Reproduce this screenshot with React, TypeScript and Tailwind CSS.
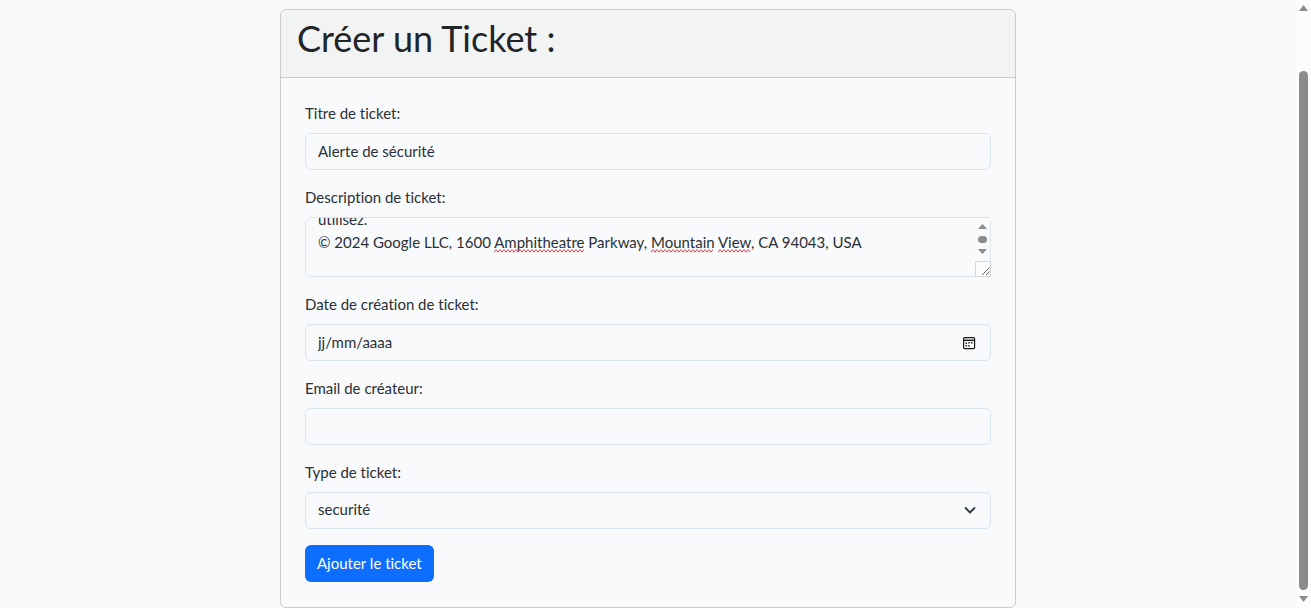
import React, { useEffect, useRef, useState } from "react";

const control =
  "block h-[37px] w-full rounded-md border border-[#d9e4ee] bg-[#f8fafc] px-3 pb-0.5 text-[15px] leading-[23px] text-[#2a3036] outline-none focus:border-blue-300";

function Field({ id, label, children }: { id: string; label: string; children: React.ReactNode }) {
  return (
    <div className="mb-4">
      <label htmlFor={id} className="mb-2 block w-fit text-[15px] leading-[23px]">
        {label}
      </label>
      {children}
    </div>
  );
}

function Squiggle({ className }: { className: string }) {
  return (
    <svg aria-hidden="true" className={"pointer-events-none absolute top-8 h-[4px] " + className}>
      <defs>
        <pattern id="wave" width="4" height="4" patternUnits="userSpaceOnUse">
          <path d="M-2 .5L0 3.200L2 .5L4 3.200L6 .5" fill="none" stroke="#e0484c" strokeWidth="1" />
        </pattern>
      </defs>
      <rect width="100%" height="4" fill="url(#wave)" />
    </svg>
  );
}

function Description() {
  const ref = useRef<HTMLTextAreaElement>(null);
  useEffect(() => {
    if (ref.current) ref.current.scrollTop = 16;
  }, []);
  return (
    <div className="relative">
      <textarea
        id="description"
        ref={ref}
        rows={2}
        spellCheck={false}
        defaultValue={"utilisez.\n© 2024 Google LLC, 1600 Amphitheatre Parkway, Mountain View, CA 94043, USA\n"}
        className="block h-[60px] w-full resize-none overflow-y-auto rounded-md border border-[#d9e4ee] bg-[#f8fafc] py-1.5 pr-7 pl-3 text-[15px] leading-[23px] text-[#2a3036] outline-none [scrollbar-width:none]"
      />
      <Squiggle className="left-[189px] w-[90px]" />
      <Squiggle className="left-[346px] w-[62px]" />
      <Squiggle className="left-[413px] w-[32px]" />
      <svg
        aria-hidden="true"
        className="pointer-events-none absolute top-0 right-0 h-[60px] w-4"
        viewBox="0 0 16 60"
      >
        <path d="M9 0H16V10H9Z" fill="#f9fafb" />
        <path d="M9 .5H15M15.5 3V44" stroke="#dfe4e8" fill="none" />
        <path d="M3 12L7.500 7L12 12Z" fill="#8b8b8b" />
        <rect x="3" y="19" width="9" height="7" rx="3.500" fill="#8b8b8b" />
        <path d="M3 32L7.500 37L12 32Z" fill="#8b8b8b" />
        <path d="M.5 44.500H15.500V59.500H.5Z" fill="#fcfcfc" stroke="#d4d7da" />
        <path d="M7 58L14.500 50.500M11 58L14.500 54.500" stroke="#666" />
      </svg>
    </div>
  );
}

export default function App() {
  const [title, setTitle] = useState("Alerte de sécurité");
  return (
    <div className="flex min-h-screen bg-[#fafafa] font-['Lato','Open_Sans',sans-serif] text-[#2a3036] [font-variant-ligatures:none]">
      <main className="flex-1 pt-[9px]">
        <section className="mx-auto w-full max-w-[736px] rounded-md border border-[#c9cacb] bg-[#f9fafb]">
          <header className="rounded-t-md border-b border-[#c9cacb] bg-[#f2f3f3] px-4 pt-[7px] pb-[17px]">
            <h1 className="text-[36px] leading-[43px] text-[#212529]">Créer un Ticket :</h1>
          </header>
          <form className="px-6 pt-6 pb-[25px]" onSubmit={(e) => e.preventDefault()}>
            <Field id="titre" label="Titre de ticket:">
              <input id="titre" type="text" className={control} value={title} onChange={(e) => setTitle(e.target.value)} />
            </Field>
            <Field id="description" label="Description de ticket:">
              <Description />
            </Field>
            <Field id="date" label="Date de création de ticket:">
              <div className="relative">
                <input id="date" type="text" placeholder="jj/mm/aaaa" className={control + " placeholder:text-[#2a3036]"} />
                <button type="button" aria-label="Ouvrir le calendrier" className="absolute inset-y-0 right-[15px] flex items-center">
                  <svg className="size-[14px]" viewBox="0 0 14 14">
                    <rect x="1.600" y="1.600" width="11" height="11" rx="1.200" fill="none" stroke="#161616" strokeWidth="1.200" />
                    <path d="M2 4.300H12" stroke="#161616" strokeWidth="1.400" />
                    <path
                      d="M6.300 6H7.700V7.400H6.300ZM9 6H10.400V7.400H9ZM3.600 6.500H5V7.900H3.600ZM3.600 9H5V10.400H3.600ZM6.300 9H7.700V10.400H6.300Z"
                      fill="#161616"
                    />
                  </svg>
                </button>
              </div>
            </Field>
            <Field id="email" label="Email de créateur:">
              <input id="email" type="email" className={control} />
            </Field>
            <Field id="type" label="Type de ticket:">
              <div className="relative">
                <select id="type" className={control + " appearance-none"} defaultValue="securité">
                  <option>securité</option>
                </select>
                <svg
                  aria-hidden="true"
                  className="pointer-events-none absolute top-[10px] right-[13px] h-4 w-4"
                  viewBox="0 0 16 16"
                >
                  <path d="M3.500 6L8 10.500L12.500 6" fill="none" stroke="#343a40" strokeWidth="1.800" strokeLinecap="round" strokeLinejoin="round" />
                </svg>
              </div>
            </Field>
            <button type="submit" className="block h-[37px] rounded-md bg-[#0d6efd] px-3 text-[15px] leading-[23px] text-white">
              Ajouter le ticket
            </button>
          </form>
        </section>
      </main>
      <div aria-hidden="true" className="flex w-[15px] shrink-0 flex-col items-center bg-[#fcfcfc] pt-[5px] pb-[6px]">
        <svg className="h-[6px] w-[9px]" viewBox="0 0 9 6">
          <path d="M0 6L4.500 0L9 6Z" fill="#8b8b8b" />
        </svg>
        <div className="mt-[60px] mb-[6px] w-[9px] flex-1 rounded-full bg-[#8b8b8b]" />
        <svg className="h-[6px] w-[9px]" viewBox="0 0 9 6">
          <path d="M0 0L4.500 6L9 0Z" fill="#8b8b8b" />
        </svg>
      </div>
    </div>
  );
}
